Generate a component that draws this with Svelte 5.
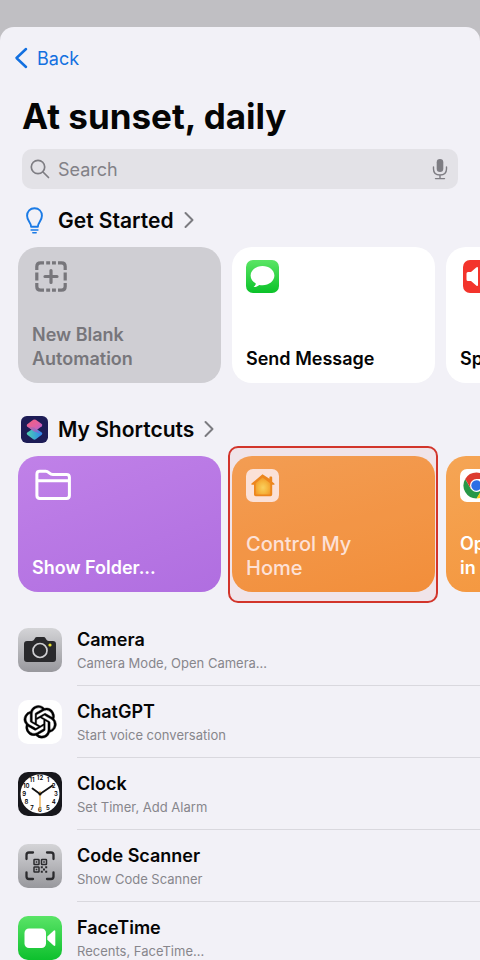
<script lang="ts">
    type Card = { title: string; icon: string; tone: string; highlighted?: boolean };
    type App = { name: string; detail: string; icon: string };

    const starters: Card[] = [
        { title: 'New Blank Automation', icon: 'blank', tone: 'grey' },
        { title: 'Send Message', icon: 'message', tone: 'white' },
        { title: 'Speak Text', icon: 'speaker', tone: 'white' }
    ];

    const shortcuts: Card[] = [
        { title: 'Show Folder...', icon: 'folder', tone: 'purple' },
        { title: 'Control My\nHome', icon: 'home', tone: 'orange', highlighted: true },
        { title: 'Open Tab\nin Chrome', icon: 'chrome', tone: 'orange' }
    ];

    const apps: App[] = [
        { name: 'Camera', detail: 'Camera Mode, Open Camera...', icon: 'camera' },
        { name: 'ChatGPT', detail: 'Start voice conversation', icon: 'chatgpt' },
        { name: 'Clock', detail: 'Set Timer, Add Alarm', icon: 'clock' },
        { name: 'Code Scanner', detail: 'Show Code Scanner', icon: 'scanner' },
        { name: 'FaceTime', detail: 'Recents, FaceTime...', icon: 'facetime' }
    ];

    const hours = Array.from({ length: 12 }, (_, i) => {
        const angle = ((i + 1) * Math.PI) / 6;
        return { label: i + 1, x: 22 + Math.sin(angle) * 15.8, y: 22 - Math.cos(angle) * 15.8 + 2 };
    });

    let query = $state('');
</script>

{#snippet cardIcon(name: string)}
    {#if name === 'blank'}
        <svg class="card-icon" viewBox="0 0 40 33" aria-hidden="true">
            <g fill="none" stroke="#77767b" stroke-width="3.2">
                <path d="M4.8 10V6.5Q4.8 2.8 8.5 2.8H12M26 2.800h3.500Q33.200 2.800 33.200 6.500V10M33.200 23v3.500Q33.200 30.200 29.500 30.200H26M12 30.200H8.500Q4.800 30.200 4.800 26.500V23" />
                <path d="M14.200 2.800h3.900M20 2.800h3.900M14.200 30.200h3.900M20 30.200h3.900M4.800 12.500v8M33.200 12.500v8" />
                <path d="M19 10.500v12M13 16.500h12" stroke-linecap="round" />
            </g>
        </svg>
    {:else if name === 'message'}
        <svg class="card-icon" viewBox="0 0 40 33" aria-hidden="true">
            <defs>
                <linearGradient id="message-bg" x1="0" y1="0" x2="0" y2="1">
                    <stop offset="0" stop-color="#5be565" />
                    <stop offset="1" stop-color="#0bc229" />
                </linearGradient>
            </defs>
            <rect width="33" height="33" rx="7" fill="url(#message-bg)" />
            <path d="M16.500 6C9.900 6 4.600 10.300 4.600 15.600c0 3.400 2.100 6.300 5.300 8-.3 1.500-1.200 2.600-2.300 3.500 2.200 0 4.200-.8 5.700-2.100 1 .2 2.100.3 3.200.3 6.600 0 11.900-4.300 11.900-9.700S23.100 6 16.500 6z" fill="#fff" />
        </svg>
    {:else if name === 'speaker'}
        <svg class="card-icon inset" viewBox="0 0 40 33" aria-hidden="true">
            <rect width="33" height="33" rx="7" fill="#f3342c" />
            <path d="M3.500 13.500q0-1.500 1.500-1.500H8l5.200-4.400q1.800-1.300 1.800.8v16.400q0 2-1.800.7L8 21H5q-1.500 0-1.500-1.500z" fill="#fff" />
            <path d="M19 11.500q4 5 0 10M23 8.500q7 8 0 16" fill="none" stroke="#fff" stroke-width="2.200" stroke-linecap="round" />
        </svg>
    {:else if name === 'folder'}
        <svg class="card-icon" viewBox="0 0 40 33" aria-hidden="true">
            <path d="M4.900 5.200Q4.900 2.300 7.800 2.300h6c3.200 0 3.500 3.100 7 3.100H34.500q2.900 0 2.900 2.900v18.300q0 2.900-2.900 2.900H7.800q-2.900 0-2.900-2.900zM5 11.800h32" fill="none" stroke="#fff" stroke-width="3" stroke-linejoin="round" />
        </svg>
    {:else if name === 'home'}
        <svg class="card-icon" viewBox="0 0 40 33" aria-hidden="true">
            <defs>
                <radialGradient id="home-glow" cx=".5" cy=".6" r=".6">
                    <stop offset="0" stop-color="#fbdc62" />
                    <stop offset=".6" stop-color="#f8bd3c" />
                    <stop offset="1" stop-color="#f3a02a" />
                </radialGradient>
            </defs>
            <rect width="33" height="33" rx="7" fill="#fdeee4" />
            <path d="M16.500 5.300L5.500 14.600q-.5 1.200.7 1.200h1.800v9.700q0 1.700 1.700 1.700h14.800q1.700 0 1.700-1.700v-9.700h1.500q1.300 0 .6-1.200l-2.100-1.800V8.500q0-.9-.9-.9h-1q-.9 0-.9.900v1.300z" fill="#ee8c1b" />
            <path d="M16.500 8.400L9.700 14.200v10q0 1.300 1.300 1.300h12q1.300 0 1.300-1.300v-10z" fill="url(#home-glow)" />
        </svg>
    {:else if name === 'chrome'}
        <svg class="card-icon" viewBox="0 0 40 33" aria-hidden="true">
            <rect width="33" height="33" rx="7" fill="#fff" />
            <path d="M5.240 10A13 13 0 0 0 16.500 29.500l6.500-9.500H11z" fill="#279847" />
            <path d="M27.760 10A13 13 0 0 1 16.500 29.500L22.100 19.700 20 10z" fill="#fccd1c" />
            <path d="M5.240 10L10.900 19.700 16.500 10.100H27.760A13 13 0 0 0 5.240 10z" fill="#dc3b2f" />
            <circle cx="16.500" cy="16.500" r="6.500" fill="#fff" />
            <circle cx="16.500" cy="16.500" r="5.200" fill="#2d6fe4" />
        </svg>
    {/if}
{/snippet}

{#snippet appIcon(name: string)}
    <svg class="app-icon" viewBox="0 0 44 44" aria-hidden="true">
        {#if name === 'camera'}
            <rect width="44" height="44" rx="10" fill="url(#silver)" />
            <path d="M6 16q0-3 3-3h5q1.500 0 2.200-1.400l.6-1.200Q17.500 9 19 9h6.500q1.500 0 2.200 1.400l.6 1.200Q29 13 30.500 13H35q3 0 3 3v15q0 3-3 3H9q-3 0-3-3z" fill="#29292c" />
            <circle cx="22" cy="22.500" r="7" fill="#29292c" stroke="#cfcfd2" stroke-width="1.700" />
            <circle cx="32" cy="17" r="1.600" fill="#e8e12e" />
        {:else if name === 'chatgpt'}
            <rect width="44" height="44" rx="10" fill="#fff" />
            <g transform="translate(5.800 5.500) scale(1.360)">
                <path d="M22.2819 9.8211a5.9847 5.9847 0 0 0-.5157-4.9108 6.0462 6.0462 0 0 0-6.5098-2.9A6.0651 6.0651 0 0 0 4.9807 4.1818a5.9847 5.9847 0 0 0-3.9977 2.9 6.0462 6.0462 0 0 0 .7427 7.0966 5.98 5.98 0 0 0 .511 4.9107 6.051 6.051 0 0 0 6.5146 2.9001A5.9847 5.9847 0 0 0 13.2599 24a6.0557 6.0557 0 0 0 5.7718-4.2058 5.9894 5.9894 0 0 0 3.9977-2.9001 6.0557 6.0557 0 0 0-.7475-7.0729zm-9.022 12.6081a4.4755 4.4755 0 0 1-2.8764-1.0408l.1419-.0804 4.7783-2.7582a.7948.7948 0 0 0 .3927-.6813v-6.7369l2.02 1.1686a.071.071 0 0 1 .038.052v5.5826a4.504 4.504 0 0 1-4.4945 4.4944zm-9.6607-4.1254a4.4708 4.4708 0 0 1-.5346-3.0137l.142.0852 4.783 2.7582a.7712.7712 0 0 0 .7806 0l5.8428-3.3685v2.3324a.0804.0804 0 0 1-.0332.0615L9.74 19.9502a4.4992 4.4992 0 0 1-6.1408-1.6464zM2.3408 7.8956a4.485 4.485 0 0 1 2.3655-1.9728V11.6a.7664.7664 0 0 0 .3879.6765l5.8144 3.3543-2.0201 1.1685a.0757.0757 0 0 1-.071 0l-4.8303-2.7865A4.504 4.504 0 0 1 2.3408 7.872zm16.5963 3.8558L13.1038 8.364 15.1192 7.2a.0757.0757 0 0 1 .071 0l4.8303 2.7913a4.4944 4.4944 0 0 1-.6765 8.1042v-5.6772a.79.79 0 0 0-.407-.667zm2.0107-3.0231l-.142-.0852-4.7735-2.7818a.7759.7759 0 0 0-.7854 0L9.409 9.2297V6.8974a.0662.0662 0 0 1 .0284-.0615l4.8303-2.7866a4.4992 4.4992 0 0 1 6.6802 4.66zM8.3065 12.863l-2.02-1.1638a.0804.0804 0 0 1-.038-.0567V6.0742a4.4992 4.4992 0 0 1 7.3757-3.4537l-.142.0805L8.704 5.459a.7948.7948 0 0 0-.3927.6813zm1.0976-2.3654l2.602-1.4998 2.6069 1.4998v2.9994l-2.5974 1.4997-2.6067-1.4997Z" fill="#000" stroke="#000" stroke-width=".3" />
            </g>
        {:else if name === 'clock'}
            <rect width="44" height="44" rx="10" fill="#17171c" />
            <circle cx="22" cy="22" r="19.500" fill="#fff" />
            {#each hours as hour (hour.label)}
                <text x={hour.x} y={hour.y} class="hour">{hour.label}</text>
            {/each}
            <path d="M22 22L14.500 16.500M22 22L34.500 13.500" stroke="#111" stroke-width="1.800" stroke-linecap="round" />
            <path d="M22 19v20" stroke="#e9a63a" stroke-width="1.200" />
            <circle cx="22" cy="22" r="1.500" fill="#111" />
        {:else if name === 'scanner'}
            <rect width="44" height="44" rx="10" fill="url(#silver)" />
            <path d="M8.500 15v-4q0-2.500 2.500-2.500h4M29 8.500h4q2.500 0 2.500 2.500v4M35.500 28.500v4q0 2.500-2.500 2.500h-4M15 35h-4q-2.500 0-2.500-2.500v-4" fill="none" stroke="#2b2b2e" stroke-width="2.300" stroke-linecap="round" />
            <g fill="none" stroke="#2b2b2e" stroke-width="1.500">
                <rect x="16" y="15.500" width="5" height="5" rx=".6" />
                <rect x="23.500" y="15.500" width="5" height="5" rx=".6" />
                <rect x="16" y="23" width="5" height="5" rx=".6" />
            </g>
            <path d="M17.700 17.200h1.600v1.600h-1.600zM25.200 17.200h1.600v1.600h-1.600zM17.700 24.700h1.600v1.600h-1.600zM22.800 22.300h2v2h-2zM27.200 22.300h2v2h-2zM25 24.500h2v2h-2zM22.800 26.700h2v2h-2zM27.200 26.700h2v2h-2z" fill="#2b2b2e" />
        {:else}
            <rect width="44" height="44" rx="10" fill="url(#green)" />
            <rect x="6.500" y="12.500" width="21.500" height="19.500" rx="4.500" fill="#fff" />
            <path d="M29.300 20.500l6.300-5.800q1.700-1.200 1.700.8v13.300q0 2-1.700.8l-6.300-5.800z" fill="#fff" />
        {/if}
    </svg>
{/snippet}

{#snippet chevron()}
    <svg class="chevron" viewBox="0 0 10 18" aria-hidden="true">
        <path d="M1.500 2L8.500 9 1.500 16" fill="none" stroke="#7b7b80" stroke-width="2" stroke-linecap="round" stroke-linejoin="round" />
    </svg>
{/snippet}

{#snippet cardRow(cards: Card[])}
    <div class="cards">
        {#each cards as card (card.title)}
            <button class="card {card.tone}" class:highlighted={card.highlighted}>
                {@render cardIcon(card.icon)}
                <span class="card-title">{card.title}</span>
            </button>
        {/each}
    </div>
{/snippet}

<svg class="defs" width="0" height="0" aria-hidden="true">
    <linearGradient id="silver" x1="0" y1="0" x2="0" y2="1">
        <stop offset="0" stop-color="#d4d4d7" />
        <stop offset="1" stop-color="#98989d" />
    </linearGradient>
    <linearGradient id="green" x1="0" y1="0" x2="0" y2="1">
        <stop offset="0" stop-color="#5ae467" />
        <stop offset="1" stop-color="#0dc02d" />
    </linearGradient>
</svg>

<main class="sheet">
    <nav>
        <button class="back">
            <svg viewBox="0 0 14 22" aria-hidden="true">
                <path d="M12 2L2.500 11 12 20" fill="none" stroke="#1370e0" stroke-width="2.500" stroke-linecap="round" stroke-linejoin="round" />
            </svg>
            Back
        </button>
    </nav>

    <h1>At sunset, daily</h1>

    <div class="search">
        <svg class="lens" viewBox="0 0 20 20" aria-hidden="true">
            <g fill="none" stroke="#7e7d83" stroke-width="1.700" stroke-linecap="round">
                <circle cx="8" cy="8" r="6.700" />
                <path d="M13 13l5.500 5.500" />
            </g>
        </svg>
        <input type="text" placeholder="Search" aria-label="Search" bind:value={query} />
        <button class="mic" aria-label="Dictate">
            <svg viewBox="0 0 16 22" aria-hidden="true">
                <rect x="4.700" y="1" width="6.600" height="13" rx="3.300" fill="#7e7d83" />
                <path d="M1.500 9v2q0 6 6.500 6t6.500-6V9M8 17v3.500M3.500 20.600h9" fill="none" stroke="#7e7d83" stroke-width="1.400" stroke-linecap="round" />
            </svg>
        </button>
    </div>

    <section>
        <h2>
            <svg class="section-icon" viewBox="0 0 28 28" aria-hidden="true">
                <g fill="none" stroke="#1b7be6" stroke-width="2" stroke-linecap="round">
                    <path d="M10.500 20.500c0-4.500-4.200-6-4.200-11.300C6.300 4.500 9.500 1.300 14 1.300s7.700 3.200 7.700 7.900c0 5.300-4.200 6.800-4.200 11.300z" stroke-linejoin="round" />
                    <path d="M10.500 23.800h7M12.300 26.700h3.400" stroke-width="1.700" />
                </g>
            </svg>
            Get Started
            {@render chevron()}
        </h2>
        {@render cardRow(starters)}
    </section>

    <section>
        <h2>
            <svg class="section-icon" viewBox="0 0 28 28" aria-hidden="true">
                <defs>
                    <linearGradient id="layer-top" x1="0" y1="0" x2="1" y2="1">
                        <stop offset="0" stop-color="#f0607c" />
                        <stop offset=".5" stop-color="#e4609f" />
                        <stop offset="1" stop-color="#a75fdc" />
                    </linearGradient>
                    <linearGradient id="layer-bottom" x1="0" y1="0" x2="1" y2="0">
                        <stop offset="0" stop-color="#4fd0b0" />
                        <stop offset="1" stop-color="#2d86ee" />
                    </linearGradient>
                    <linearGradient id="layer-mid" x1="0" y1="0" x2="1" y2="1">
                        <stop offset="0" stop-color="#e2609a" />
                        <stop offset="1" stop-color="#4a78e8" />
                    </linearGradient>
                </defs>
                <rect width="28" height="28" rx="6" fill="#1d1c56" />
                <path d="M12.700 13q1.300-.9 2.600 0l6.200 4.200q1.200 1.100 0 2.200l-6.200 4.700q-1.300.9-2.600 0L6.500 19.400q-1.200-1.100 0-2.200z" fill="url(#layer-bottom)" />
                <path d="M12.700 4q1.300-.9 2.600 0l6.200 4.400q1.200 1.100 0 2.200l-6.200 4.700q-1.300.9-2.600 0L6.500 10.800q-1.200-1.100 0-2.200z" fill="url(#layer-top)" />
                <path d="M6 10.300L13.800 12l7.900 7-7.700-2.600z" fill="url(#layer-mid)" />
            </svg>
            My Shortcuts
            {@render chevron()}
        </h2>
        {@render cardRow(shortcuts)}
    </section>

    <ul>
        {#each apps as app (app.name)}
            <li>
                {@render appIcon(app.icon)}
                <div class="app-text">
                    <strong>{app.name}</strong>
                    <span>{app.detail}</span>
                </div>
            </li>
        {/each}
    </ul>
</main>

<style>
    :global(body) {
        background: #c0bfc3;
        font-family: Inter, "Liberation Sans", sans-serif;
        color: #050505;
    }

    .defs {
        position: absolute;
    }

    .sheet {
        margin-top: 27px;
        padding-top: 15px;
        border-radius: 14px 14px 0 0;
        background: #f2f1f7;
        overflow: hidden;
    }

    button {
        padding: 0;
        border: none;
        background: none;
        font: inherit;
        color: inherit;
        cursor: pointer;
    }

    nav {
        padding: 0 14px;
    }

    .back {
        display: flex;
        align-items: center;
        gap: 9px;
        height: 32px;
        font-size: 18px;
        color: #1370e0;
    }

    .back svg {
        width: 14px;
        height: 22px;
    }

    h1 {
        margin: 20px 22px 11px;
        font-size: 35px;
        line-height: 44px;
        font-weight: 700;
    }

    .search {
        display: flex;
        align-items: center;
        gap: 8px;
        height: 40px;
        margin: 0 22px;
        padding: 0 10px 0 8px;
        border-radius: 10px;
        background: #e3e2e7;
    }

    .lens {
        width: 20px;
        height: 20px;
    }

    .search input {
        flex: 1;
        min-width: 0;
        padding: 0;
        border: none;
        outline: none;
        background: none;
        font: inherit;
        font-size: 18px;
    }

    .search input::placeholder {
        color: #828187;
        opacity: 1;
    }

    .mic svg {
        display: block;
        width: 16px;
        height: 22px;
    }

    section {
        padding-top: 13px;
    }

    section + section {
        padding-top: 28px;
    }

    h2 {
        display: flex;
        align-items: center;
        gap: 10px;
        height: 36px;
        margin: 0 21px 9px;
        font-size: 21px;
        font-weight: 600;
    }

    .section-icon {
        width: 27px;
        height: 27px;
    }

    .chevron {
        width: 10px;
        height: 18px;
    }

    .cards {
        display: flex;
        gap: 11px;
        padding-left: 18px;
    }

    .card {
        position: relative;
        flex: none;
        display: flex;
        flex-direction: column;
        justify-content: space-between;
        align-items: flex-start;
        box-sizing: border-box;
        width: 203px;
        height: 136px;
        padding: 13px 14px 12px;
        border-radius: 20px;
        text-align: left;
    }

    .card-icon {
        width: 40px;
        height: 33px;
    }

    .inset {
        margin-left: 3px;
    }

    .card-title {
        font-size: 18px;
        line-height: 24px;
        font-weight: 600;
        white-space: pre-line;
    }

    .grey {
        background: #cfced3;
        color: #77767b;
    }

    .white {
        background: #fff;
    }

    .purple {
        background: linear-gradient(160deg, #c081e8, #b06ee0);
        color: #fff;
    }

    .orange {
        background: linear-gradient(165deg, #f5a555, #f4953b);
        color: #fff;
    }

    .highlighted {
        color: #ffeee2;
    }

    .highlighted .card-title {
        font-size: 20px;
        font-weight: 500;
    }

    .highlighted::after {
        content: '';
        position: absolute;
        inset: -10px -3px -11px -4px;
        border: 2px solid #d2352b;
        border-radius: 10px;
        background: rgba(230, 60, 50, 0.07);
    }

    ul {
        margin: 22px 0 0;
        padding: 0 0 0 18px;
        list-style: none;
    }

    li {
        display: flex;
        align-items: center;
        gap: 15px;
    }

    .app-icon {
        flex: none;
        width: 44px;
        height: 44px;
    }

    .hour {
        font-size: 6px;
        font-weight: 600;
        text-anchor: middle;
    }

    .app-text {
        flex: 1;
        display: flex;
        flex-direction: column;
        justify-content: center;
        height: 71px;
        border-bottom: 1px solid #d9d8de;
    }

    .app-text strong {
        font-size: 18px;
        line-height: 26px;
        font-weight: 600;
    }

    .app-text span {
        font-size: 13px;
        line-height: 20px;
        color: #87868c;
    }
</style>
